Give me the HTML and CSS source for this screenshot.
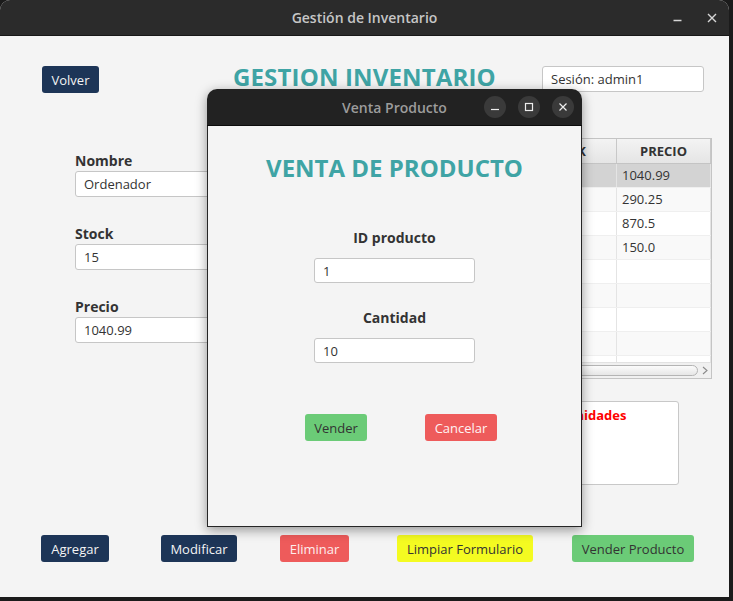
FILE: index.html
```html
<!DOCTYPE html>
<html lang="es">
<head>
<meta charset="utf-8">
<title>Gestión de Inventario</title>
<link rel="stylesheet" href="styles.css">
</head>
<body>
<div class="window">
  <header class="titlebar">
    <span class="wtitle">Gestión de Inventario</span>
    <div class="wctl">
      <svg class="wmin" width="9" height="10" viewBox="0 0 9 10"><line x1="0.5" y1="7.5" x2="8.5" y2="7.5" stroke="#d6d6d6" stroke-width="1.3"/></svg>
      <svg class="wclose" width="10" height="10" viewBox="0 0 10 10"><path d="M1 1 L9 9 M9 1 L1 9" stroke="#d6d6d6" stroke-width="1.4" fill="none"/></svg>
    </div>
  </header>
  <main class="content">
    <div class="toprow">
      <button class="btn navy volver">Volver</button>
      <h1 class="heading">GESTION INVENTARIO</h1>
      <div class="field session">Sesión: admin1</div>
    </div>
    <div class="middle">
      <div class="form">
        <div class="group">
          <label class="lbl">Nombre</label>
          <div class="field wide">Ordenador</div>
        </div>
        <div class="group">
          <label class="lbl">Stock</label>
          <div class="field wide">15</div>
        </div>
        <div class="group">
          <label class="lbl">Precio</label>
          <div class="field wide">1040.99</div>
        </div>
      </div>
      <div class="right">
        <div class="table">
          <div class="trow thead">
            <div class="cell">ID</div>
            <div class="cell">NOMBRE</div>
            <div class="cell">STOCK</div>
            <div class="cell">PRECIO</div>
          </div>
          <div class="tbody">
            <div class="trow sel"><div class="cell">1</div><div class="cell">Ordenador</div><div class="cell">15</div><div class="cell">1040.99</div></div>
            <div class="trow odd"><div class="cell">2</div><div class="cell">Monitor</div><div class="cell">20</div><div class="cell">290.25</div></div>
            <div class="trow"><div class="cell">3</div><div class="cell">Portátil</div><div class="cell">8</div><div class="cell">870.5</div></div>
            <div class="trow odd"><div class="cell">4</div><div class="cell">Teclado</div><div class="cell">30</div><div class="cell">150.0</div></div>
            <div class="trow"><div class="cell"></div><div class="cell"></div><div class="cell"></div><div class="cell"></div></div>
            <div class="trow odd"><div class="cell"></div><div class="cell"></div><div class="cell"></div><div class="cell"></div></div>
            <div class="trow"><div class="cell"></div><div class="cell"></div><div class="cell"></div><div class="cell"></div></div>
            <div class="trow odd"><div class="cell"></div><div class="cell"></div><div class="cell"></div><div class="cell"></div></div>
            <div class="trow"><div class="cell"></div><div class="cell"></div><div class="cell"></div><div class="cell"></div></div>
          </div>
          <div class="hscroll">
            <div class="thumb"></div>
            <div class="arrow"><svg width="6" height="9" viewBox="0 0 6 9"><path d="M1 1 L5 4.5 L1 8" stroke="#8a8a8a" stroke-width="1.1" fill="none"/></svg></div>
          </div>
        </div>
        <div class="notes">Stock bajo: 2 unidades</div>
      </div>
    </div>
    <div class="actions">
      <button class="btn navy b-agregar">Agregar</button>
      <button class="btn navy b-modificar">Modificar</button>
      <button class="btn red b-eliminar">Eliminar</button>
      <button class="btn yellow b-limpiar">Limpiar Formulario</button>
      <button class="btn green b-vender">Vender Producto</button>
    </div>
  </main>
</div>

<div class="dialog">
  <header class="dtitlebar">
    <span class="dtitle">Venta Producto</span>
    <div class="dctl">
      <span class="circle"><svg width="10" height="10" viewBox="0 0 10 10"><line x1="1" y1="7.5" x2="9" y2="7.5" stroke="#ededed" stroke-width="1.2"/></svg></span>
      <span class="circle"><svg width="10" height="10" viewBox="0 0 10 10"><rect x="1.5" y="1.5" width="7" height="7" stroke="#ededed" stroke-width="1.2" fill="none"/></svg></span>
      <span class="circle"><svg width="10" height="10" viewBox="0 0 10 10"><path d="M1.5 1.5 L8.5 8.5 M8.5 1.5 L1.5 8.5" stroke="#ededed" stroke-width="1.2" fill="none"/></svg></span>
    </div>
  </header>
  <div class="dbody">
    <h2 class="heading dheading">VENTA DE PRODUCTO</h2>
    <label class="lbl dlbl first">ID producto</label>
    <div class="field dfield">1</div>
    <label class="lbl dlbl">Cantidad</label>
    <div class="field dfield">10</div>
    <div class="dactions">
      <button class="btn green b-dvender">Vender</button>
      <button class="btn red b-cancelar">Cancelar</button>
    </div>
  </div>
</div>
</body>
</html>
```

FILE: styles.css
```css
* { box-sizing: border-box; }
html, body { margin: 0; padding: 0; }
body {
  width: 733px;
  height: 601px;
  overflow: hidden;
  position: relative;
  background: #1b1b1b;
  font-family: "Open Sans", "Liberation Sans", sans-serif;
  font-size: 13px;
  color: #333;
}

.window {
  width: 729px;
  height: 597px;
  background: #f4f4f4;
  border-radius: 10px 10px 0 0;
  overflow: hidden;
}

.titlebar {
  height: 36px;
  background: #2b2b2b;
  border-bottom: 1px solid #181818;
  display: grid;
  grid-template-columns: 1fr auto 1fr;
  align-items: center;
}
.wtitle {
  grid-column: 2;
  color: #c6c6c6;
  font-weight: 600;
  font-size: 14px;
}
.wctl {
  justify-self: end;
  display: flex;
  align-items: center;
  gap: 25px;
  padding-right: 12px;
}
.wctl svg { display: block; }

.content { padding-top: 30px; }

.btn {
  font-family: "Open Sans", "Liberation Sans", sans-serif;
  font-size: 13px;
  height: 27px;
  border: none;
  border-radius: 3px;
  padding: 0;
  display: flex;
  align-items: center;
  justify-content: center;
}
.navy { background: #1d3557; color: #f4f4f4; }
.red { background: #ee5b5b; color: #fdeeee; }
.yellow { background: #f4fb21; color: #333; }
.green { background: #6bcb77; color: #333; }

.toprow {
  display: flex;
  align-items: flex-start;
  height: 27px;
}
.volver { margin-left: 42px; width: 57px; }
.heading {
  margin: 0;
  font-size: 24px;
  font-weight: 700;
  line-height: 34px;
  color: #3fa4a5;
}
.toprow .heading { margin-left: 134px; margin-top: -6px; letter-spacing: 0.15px; }

.field {
  background: #fff;
  border: 1px solid #c6c6c6;
  border-radius: 3px;
  height: 26px;
  display: flex;
  align-items: center;
  padding: 0 8px;
  color: #333;
}
.session { margin-left: auto; margin-right: 25px; width: 162px; }

.middle {
  margin-top: 45px;
  display: flex;
}
.form { margin-left: 75px; width: 185px; padding-top: 13px; }
.group { margin-bottom: 27px; }
.lbl {
  display: block;
  font-size: 14px;
  font-weight: 700;
  line-height: 19px;
  color: #333;
}
.wide { margin-top: 1px; }

.right {
  margin-left: auto;
  margin-right: 17px;
  width: 422px;
}

.table {
  height: 241px;
  border: 1px solid #c4c4c4;
  background: #fff;
  display: flex;
  flex-direction: column;
}
.trow {
  display: grid;
  grid-template-columns: 69px 154px 103px 94px;
  height: 24px;
  border-bottom: 1px solid #efefef;
}
.trow .cell {
  line-height: 23px;
  padding: 0 5px;
  border-right: 1px solid #e4e4e4;
  white-space: nowrap;
  overflow: hidden;
}
.thead {
  height: 25px;
  background: linear-gradient(#f3f3f3, #e5e5e5);
  border-bottom: 1px solid #c4c4c4;
}
.thead .cell {
  text-align: center;
  font-weight: 700;
  border-right: 1px solid #c8c8c8;
  line-height: 24px;
}
.tbody { flex: 1; overflow: hidden; }
.odd { background: #f9f9f9; }
.sel { background: #d3d3d3; }

.hscroll {
  height: 16px;
  background: #f0f0f0;
  display: flex;
  align-items: center;
  border-top: 1px solid #e2e2e2;
}
.thumb {
  flex: 1;
  height: 11px;
  margin-left: 2px;
  border: 1px solid #b4b4b4;
  border-radius: 6px;
  background: linear-gradient(#fbfbfb, #e6e6e6);
}
.arrow {
  width: 13px;
  display: flex;
  justify-content: center;
  align-items: center;
}
.arrow svg { display: block; }

.notes {
  margin-top: 22px;
  margin-left: 183px;
  width: 206px;
  height: 84px;
  background: #fff;
  border: 1px solid #c8c8c8;
  border-radius: 3px;
  padding: 4px 8px;
  color: #ff0000;
  font-weight: 700;
  line-height: 18px;
  white-space: nowrap;
}

.actions {
  margin-top: 50px;
  display: flex;
}
.b-agregar { margin-left: 41px; width: 68px; }
.b-modificar { margin-left: 52px; width: 76px; }
.b-eliminar { margin-left: 43px; width: 69px; }
.b-limpiar { margin-left: 48px; width: 136px; }
.b-vender { margin-left: 39px; width: 122px; }

/* dialog window overlay */
.dialog {
  position: absolute;
  left: 207px;
  top: 89px;
  width: 375px;
  height: 438px;
  box-shadow: 0 3px 12px rgba(0, 0, 0, 0.4);
  border-radius: 10px 10px 0 0;
}
.dtitlebar {
  height: 37px;
  background: #222;
  border-bottom: 1px solid #0c0c0c;
  border-radius: 10px 10px 0 0;
  display: grid;
  grid-template-columns: 1fr auto 1fr;
  align-items: center;
}
.dtitle {
  grid-column: 2;
  color: #9c9c9c;
  font-weight: 600;
  font-size: 14px;
}
.dctl {
  justify-self: end;
  display: flex;
  gap: 12px;
  padding-right: 8px;
}
.circle {
  width: 22px;
  height: 22px;
  border-radius: 50%;
  background: #3a3a3a;
  display: flex;
  align-items: center;
  justify-content: center;
}
.circle svg { display: block; }

.dbody {
  height: 401px;
  background: #f4f4f4;
  border: 1px solid #262626;
  border-top: none;
  display: flex;
  flex-direction: column;
  align-items: center;
  padding-top: 25px;
}
.dlbl { margin-top: 25px; }
.dlbl.first { margin-top: 43px; }
.dfield {
  width: 161px;
  height: 25px;
  margin-top: 11px;
}
.dactions {
  align-self: stretch;
  display: flex;
  gap: 58px;
  padding-left: 97px;
  margin-top: 51px;
}
.b-dvender { width: 62px; }
.b-cancelar { width: 72px; color: #fff3f3; }
```
